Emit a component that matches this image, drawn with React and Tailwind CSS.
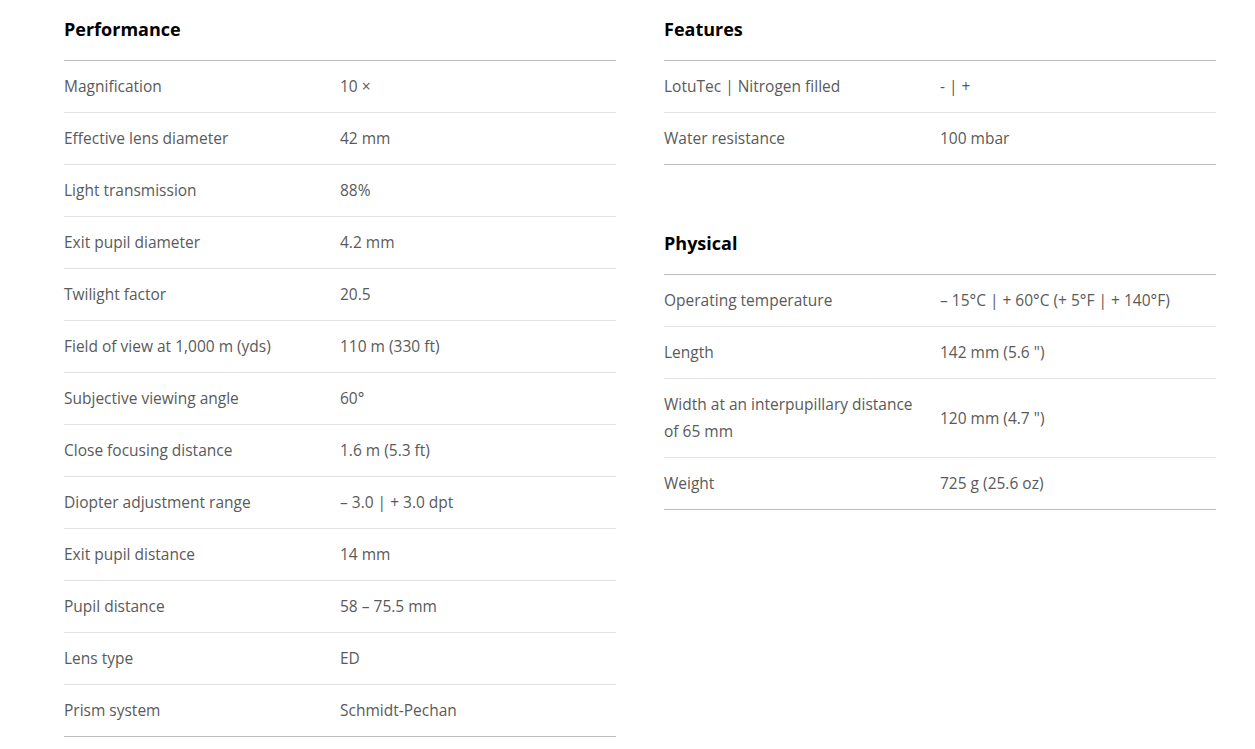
const performance = [
  ['Magnification', '10 ×'],
  ['Effective lens diameter', '42 mm'],
  ['Light transmission', '88%'],
  ['Exit pupil diameter', '4.2 mm'],
  ['Twilight factor', '20.5'],
  ['Field of view at 1,000 m (yds)', '110 m (330 ft)'],
  ['Subjective viewing angle', '60°'],
  ['Close focusing distance', '1.6 m (5.3 ft)'],
  ['Diopter adjustment range', '– 3.0 | + 3.0 dpt'],
  ['Exit pupil distance', '14 mm'],
  ['Pupil distance', '58 – 75.5 mm'],
  ['Lens type', 'ED'],
  ['Prism system', 'Schmidt-Pechan'],
];

const features = [
  ['LotuTec | Nitrogen filled', '- | +'],
  ['Water resistance', '100 mbar'],
];

const physical = [
  ['Operating temperature', '– 15°C | + 60°C (+ 5°F | + 140°F)'],
  ['Length', '142 mm (5.6 ")'],
  ['Width at an interpupillary distance of 65 mm', '120 mm (4.7 ")'],
  ['Weight', '725 g (25.6 oz)'],
];

function SpecTable({ title, rows, className = '' }) {
  return (
    <div className={className}>
      <h3 className="h-[60px] flex items-center text-[18px] font-bold text-black pb-[1px]">{title}</h3>
      <div className="border-t border-b border-[#bdbdbd]">
        {rows.map(([label, value], i) => (
          <div
            key={label}
            className={`grid grid-cols-2 items-center py-3 leading-[27px] ${i < rows.length - 1 ? 'border-b border-[#e3e3e3]' : ''}`}
          >
            <div className="pr-6">{label}</div>
            <div>{value}</div>
          </div>
        ))}
      </div>
    </div>
  );
}

export default function App() {
  return (
    <div
      className="bg-white w-[1255px] min-h-[749px] text-[15.5px] text-[#5a5a5a]"
      style={{ fontFamily: '"Open Sans", "Noto Sans", sans-serif' }}
    >
      <div className="grid grid-cols-2 gap-12 w-[1152px] ml-16">
        <SpecTable title="Performance" rows={performance} />
        <div>
          <SpecTable title="Features" rows={features} />
          <SpecTable title="Physical" rows={physical} className="mt-[49px]" />
        </div>
      </div>
    </div>
  );
}
